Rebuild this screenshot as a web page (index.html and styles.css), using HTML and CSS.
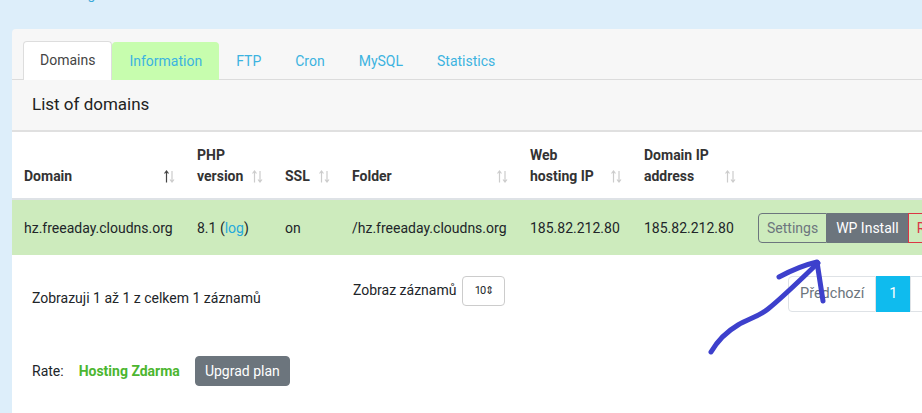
FILE: index.html
```html
<!DOCTYPE html>
<html lang="en">
<head>
    <meta charset="UTF-8">
    <meta name="viewport" content="width=device-width, initial-scale=1.0">
    <title>Hosting - Domains</title>
    <link rel="stylesheet" href="styles.css">
</head>
<body>
    <div class="crumbs"><a href="#">Web hosting</a></div>
    <div class="container">
        <div class="card">
            <ul class="tabs">
                <li class="tab active"><a href="#">Domains</a></li>
                <li class="tab tab-info"><a href="#">Information</a></li>
                <li class="tab"><a href="#">FTP</a></li>
                <li class="tab"><a href="#">Cron</a></li>
                <li class="tab"><a href="#">MySQL</a></li>
                <li class="tab"><a href="#">Statistics</a></li>
            </ul>
            <div class="card-title">List of domains</div>
            <div class="card-body">
                <table class="domains">
                    <thead>
                        <tr>
                            <th class="col-domain"><div class="th"><span>Domain</span><svg class="sort asc" viewBox="0 0 11 13"><path class="up" d="M2.5 12.5V1M0.5 3.5L2.5 1L4.5 3.5"/><path class="down" d="M8 1V12M6 9.5L8 12L10 9.5"/></svg></div></th>
                            <th class="col-php"><div class="th"><span>PHP<br>version</span><svg class="sort" viewBox="0 0 11 13"><path class="up" d="M2.5 12.5V1M0.5 3.5L2.5 1L4.5 3.5"/><path class="down" d="M8 1V12M6 9.5L8 12L10 9.5"/></svg></div></th>
                            <th class="col-ssl"><div class="th"><span>SSL</span><svg class="sort" viewBox="0 0 11 13"><path class="up" d="M2.5 12.5V1M0.5 3.5L2.5 1L4.5 3.5"/><path class="down" d="M8 1V12M6 9.5L8 12L10 9.5"/></svg></div></th>
                            <th class="col-folder"><div class="th"><span>Folder</span><svg class="sort" viewBox="0 0 11 13"><path class="up" d="M2.5 12.5V1M0.5 3.5L2.5 1L4.5 3.5"/><path class="down" d="M8 1V12M6 9.5L8 12L10 9.5"/></svg></div></th>
                            <th class="col-web"><div class="th"><span>Web<br>hosting IP</span><svg class="sort" viewBox="0 0 11 13"><path class="up" d="M2.5 12.5V1M0.5 3.5L2.5 1L4.5 3.5"/><path class="down" d="M8 1V12M6 9.5L8 12L10 9.5"/></svg></div></th>
                            <th class="col-ip"><div class="th"><span>Domain IP<br>address</span><svg class="sort" viewBox="0 0 11 13"><path class="up" d="M2.5 12.5V1M0.5 3.5L2.5 1L4.5 3.5"/><path class="down" d="M8 1V12M6 9.5L8 12L10 9.5"/></svg></div></th>
                            <th class="col-actions"></th>
                        </tr>
                    </thead>
                    <tbody>
                        <tr class="row-ok">
                            <td>hz.freeaday.cloudns.org</td>
                            <td>8.1 (<a href="#">log</a>)</td>
                            <td>on</td>
                            <td>/hz.freeaday.cloudns.org</td>
                            <td>185.82.212.80</td>
                            <td>185.82.212.80</td>
                            <td>
                                <div class="btn-group">
                                    <button class="btn btn-outline">Settings</button>
                                    <button class="btn btn-dark">WP Install</button>
                                    <button class="btn btn-danger">Remove</button>
                                </div>
                            </td>
                        </tr>
                    </tbody>
                </table>

                <div class="table-footer">
                    <div class="table-info">Zobrazuji 1 až 1 z celkem 1 záznamů</div>
                    <div class="length">
                        <label>Zobraz záznamů</label>
                        <span class="select">10&#8661;</span>
                    </div>
                    <ul class="pagination">
                        <li class="page disabled">Předchozí</li>
                        <li class="page current">1</li>
                        <li class="page">Další</li>
                    </ul>
                </div>

                <div class="rate">
                    <span>Rate:</span>
                    <strong class="plan">Hosting Zdarma</strong>
                    <button class="btn btn-upgrade">Upgrad plan</button>
                </div>
            </div>
        </div>
    </div>

    <!-- hand drawn arrow pointing at WP Install -->
    <svg class="arrow" width="922" height="413" viewBox="0 0 922 413">
        <path d="M711 352 C718 340 726 332 738 325 C748 319 758 317 768 309 C784 296 800 280 818 263" />
        <path d="M779 277 C792 270 804 265 817 262 C819 275 821 288 823 301" />
    </svg>
</body>
</html>
```

FILE: styles.css
```css
body {
    font-family: Roboto, "Liberation Sans", Arial, sans-serif;
    font-size: 14px;
    color: #212529;
    margin: 0;
    padding: 0;
    background-color: #ddeefa;
    overflow: hidden;
}
a {
    color: #25a9db;
    text-decoration: none;
}
/* only the bottom of the breadcrumb line is left on screen */
.crumbs {
    height: 3px;
    overflow: hidden;
    padding-left: 18px;
    font-size: 14px;
    line-height: 17px;
}
.crumbs a {
    display: block;
    margin-top: -14px;
    color: #3aa8d8;
}
.container {
    padding: 26px 0 0 12px;
}
.card {
    width: 1000px;
    background-color: #f7f7f7;
    border-radius: 4px 0 0 0;
    min-height: 420px;
}

/* tabs */
.tabs {
    list-style: none;
    margin: 0;
    padding: 12px 0 0 11px;
    display: flex;
    align-items: flex-end;
    border-bottom: 1px solid #dcdcdc;
}
.tab {
    flex: 0 0 auto;
    margin-bottom: -1px;
}
.tab a {
    display: block;
    height: 37px;
    line-height: 37px;
    padding: 0 16px;
    color: #3cb3e0;
    border: 1px solid transparent;
    border-bottom: none;
    border-radius: 4px 4px 0 0;
}
.tab.active a {
    background-color: #ffffff;
    color: #444;
    border-color: #dddddd;
    height: 38px;
}
.tab-info a {
    background-color: #c7fdae;
    border-color: #c7fdae;
}
.card-title {
    font-size: 17px;
    color: #222;
    padding: 0 20px;
    height: 50px;
    line-height: 49px;
    border-bottom: 2px solid #e0e0e0;
}
.card-body {
    background-color: #ffffff;
    min-height: 320px;
}

/* table */
.domains {
    border-collapse: collapse;
    white-space: nowrap;
}
.domains th {
    text-align: left;
    vertical-align: bottom;
    font-weight: bold;
    color: #333;
    padding: 0 0 11px 12px;
    height: 55px;
    line-height: 21px;
    border-bottom: 2px solid #dee2e6;
}
.th {
    display: flex;
    justify-content: space-between;
    align-items: flex-end;
}
.sort {
    width: 11px;
    height: 13px;
    margin: 0 10px 4px 0;
    flex: none;
}
.sort path {
    fill: none;
    stroke: #cccccc;
    stroke-width: 1.2;
}
.sort.asc .up {
    stroke: #444444;
}
.col-domain { width: 161px; }
.col-php { width: 76px; }
.col-ssl { width: 55px; }
.col-folder { width: 166px; }
.col-web { width: 102px; }
.col-ip { width: 102px; }
.domains td {
    padding: 12px 0 12px 12px;
    height: 31px;
    vertical-align: middle;
}
.row-ok td {
    background-color: #cdebbd;
}

/* buttons */
.btn-group {
    display: flex;
}
.btn {
    font-family: inherit;
    font-size: 14px;
    height: 30px;
    padding: 0 8px;
    border: 1px solid #6c757d;
    cursor: pointer;
}
.btn-outline {
    background-color: transparent;
    color: #6c757d;
    border-radius: 4px 0 0 4px;
}
.btn-dark {
    background-color: #6c757d;
    color: #ffffff;
}
.btn-danger {
    background-color: transparent;
    color: #dc3545;
    border-color: #dc3545;
}

/* footer of the table */
.table-footer {
    display: flex;
    align-items: flex-start;
    padding: 21px 0 0 20px;
    height: 80px;
}
.table-info {
    width: 321px;
    padding-top: 14px;
}
.length {
    display: flex;
    align-items: flex-start;
    width: 435px;
}
.length label {
    padding-top: 6px;
    margin-right: 6px;
}
.select {
    display: inline-block;
    width: 41px;
    height: 28px;
    line-height: 28px;
    border: 1px solid #cccccc;
    border-radius: 4px;
    font-size: 11px;
    text-align: center;
    letter-spacing: -1px;
}
.pagination {
    list-style: none;
    margin: 0;
    padding: 0;
    display: flex;
    font-size: 14.5px;
}
.page {
    height: 34px;
    line-height: 34px;
    padding: 0 12px;
    border: 1px solid #dee2e6;
    color: #17b7ea;
}
.page.disabled {
    color: #6c757d;
    border-radius: 4px 0 0 4px;
    padding: 0 11px;
}
.page.current {
    background-color: #0fbbee;
    border-color: #0fbbee;
    padding: 0 12px;
    color: #ffffff;
}

/* plan */
.rate {
    display: flex;
    align-items: center;
    padding-left: 20px;
}
.rate span {
    margin-right: 15px;
}
.plan {
    color: #4cb630;
    margin-right: 15px;
}
.btn-upgrade {
    background-color: #6c757d;
    color: #ffffff;
    border-radius: 4px;
    padding: 0 9px;
}

.arrow {
    position: absolute;
    left: 0;
    top: 0;
    pointer-events: none;
}
.arrow path {
    fill: none;
    stroke: #3d40cc;
    stroke-width: 5;
    stroke-linecap: round;
    stroke-linejoin: round;
}
```
